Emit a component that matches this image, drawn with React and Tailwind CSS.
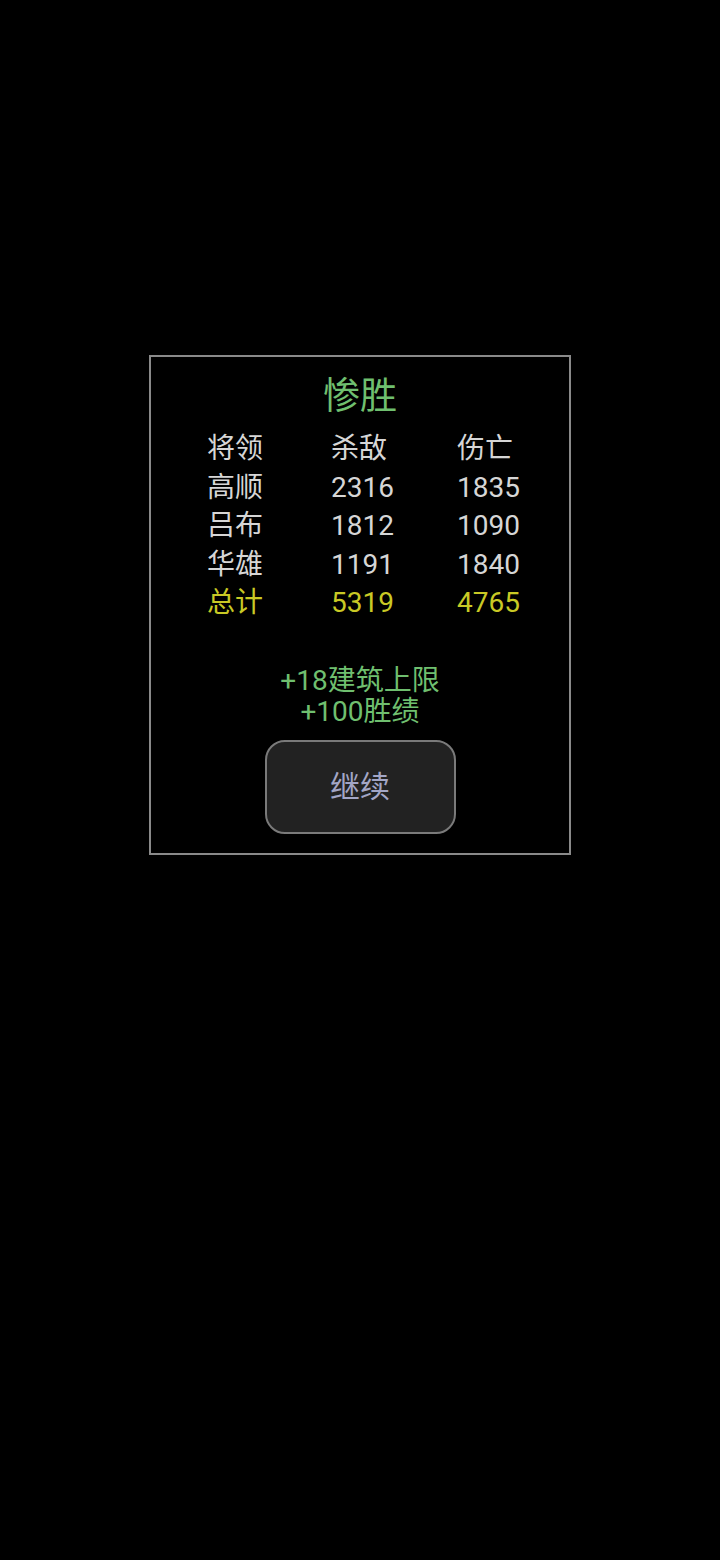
import React from 'react';

const rows = [
    { name: '高顺', kill: '2316', loss: '1835' },
    { name: '吕布', kill: '1812', loss: '1090' },
    { name: '华雄', kill: '1191', loss: '1840' },
];

const font = { fontFamily: 'Roboto, "Noto Sans CJK SC", sans-serif' };

const Row = ({ cells, color }) => (
    <div className={`flex h-[38.5px] items-center text-[28px] leading-none ${color}`}>
        <span className="w-[124px]">{cells[0]}</span>
        <span className="w-[126px]">{cells[1]}</span>
        <span>{cells[2]}</span>
    </div>
);

const App = () => {
    return (
        <div className="min-h-[1560px] w-full bg-black flex justify-center" style={font}>
            <div className="mt-[355px] w-[422px] h-[500px] border-2 border-[#8a8a8a] flex flex-col">
                <div className="h-[73px] pt-[20px] text-center text-[37px] leading-[40px] text-[#6fbf6f]">惨胜</div>
                <div className="pl-[56px]">
                    <Row cells={['将领', '杀敌', '伤亡']} color="text-[#d6d6d6]" />
                    {rows.map((r) => (
                        <Row key={r.name} cells={[r.name, r.kill, r.loss]} color="text-[#d6d6d6]" />
                    ))}
                    <Row cells={['总计', '5319', '4765']} color="text-[#c9c925]" />
                </div>
                <div className="mt-[42px] text-center text-[28px] leading-[31px] text-[#6fbf6f]">
                    <p>+18建筑上限</p>
                    <p>+100胜绩</p>
                </div>
                <div className="flex justify-center mt-[13px]">
                    <button className="w-[191px] h-[94px] rounded-[20px] bg-[#222222] border-2 border-[#7a7a7a] text-[30px] text-[#a3a6c6]">
                        继续
                    </button>
                </div>
            </div>
        </div>
    );
};

export default App;
